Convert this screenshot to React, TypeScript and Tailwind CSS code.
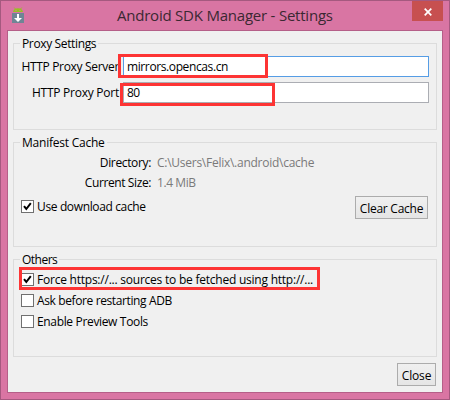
import type { ReactNode } from "react";

function Group({ title, tracking, className, children }: { title: string; tracking: string; className: string; children: ReactNode }) {
  return (
    <section className={`ml-[5px] w-[424px] border border-[#dcdcdc] ${className}`}>
      <h2 className={`-mt-[9px] ml-[6px] h-4 w-fit bg-[#f0f0f0] pl-[2px] pr-[2px] ${tracking}`}>{title}</h2>
      {children}
    </section>
  );
}

function Check({ label, checked, tracking, className = "" }: { label: string; checked?: boolean; tracking: string; className?: string }) {
  return (
    <label className={`ml-[7px] flex h-4 items-start gap-[3px] ${className}`}>
      <span className="mt-[2px] size-[13px] shrink-0 border border-[#707070] bg-white">
        {checked && (
          <svg viewBox="0 0 11 11" className="block size-[11px]">
            <path d="M2 5.2 4.3 8 8.8 2.2" fill="none" stroke="#000" strokeWidth="2" />
          </svg>
        )}
      </span>
      <span className={tracking}>{label}</span>
    </label>
  );
}

function Field({ label, value, labelTracking, valueTracking, border, className }: { label: string; value: string; labelTracking: string; valueTracking: string; border: string; className: string }) {
  return (
    <div className={`flex h-[21px] gap-[4px] ${className}`}>
      <span className={`w-[105px] shrink-0 pt-[2px] text-right ${labelTracking}`}>{label}</span>
      <div className={`w-[306px] border bg-white pl-[3px] pt-px ${border} ${valueTracking}`}>{value}</div>
    </div>
  );
}

function Info({ label, value, labelTracking, valueTracking }: { label: string; value: string; labelTracking: string; valueTracking: string }) {
  return (
    <div className="mt-1 flex h-4 gap-[6px]">
      <span className={`w-[137px] text-right ${labelTracking}`}>{label}</span>
      <span className={`text-[#7a7a7a] ${valueTracking}`}>{value}</span>
    </div>
  );
}

export default function App() {
  return (
    <div className="relative h-[400px] w-[450px] overflow-hidden whitespace-nowrap border border-[#a5597f] bg-[#d975a3] font-['Open_Sans','Noto_Sans',sans-serif] text-[12px] leading-[18px] text-black">
      <header className="flex h-[29px] items-start">
        <svg viewBox="0 0 12 16" className="ml-[11px] mt-[6px] h-4 w-3 shrink-0">
          <path d="M1 5C1.2 2.8 3.2 1.2 6 1.2s4.800 1.600 5 3.800z" fill="#97c024" />
          <path d="M2.200.5 3.500 2M9.800.5 8.500 2" stroke="#97c024" strokeWidth=".9" />
          <path d="M3.500 3h1v1h-1zM7.500 3h1v1h-1z" fill="#d975a3" />
          <path d="M0 6h12v10H0z" fill="#6f8595" />
          <path d="M5 7h2v4h3l-4 4-4-4h3z" fill="#fff" />
        </svg>
        <h1 className="ml-[93px] mt-1 w-[217px] text-[15px] leading-5 tracking-[-0.22px] text-[#3b2832]">Android SDK Manager - Settings</h1>
        <button className="ml-auto mr-[6px] mt-0 flex h-5 w-[31px] items-center justify-center bg-[#c75050]">
          <svg viewBox="0 0 8 8" className="mt-px size-2">
            <path d="M.7.7 7.300 7.300M7.300.7.7 7.300" stroke="#fff" strokeWidth="1.700" />
          </svg>
        </button>
      </header>

      <main className="ml-[6px] h-[363px] w-[436px] border border-[#b55f88] bg-[#f0f0f0]">
        <Group title="Proxy Settings" tracking="tracking-[-0.36px]" className="mt-3 h-[87px]">
          <Field label="HTTP Proxy Server" value="mirrors.opencas.cn" labelTracking="tracking-[-0.32px]" valueTracking="tracking-[-0.39px]" border="border-[#569de5]" className="mt-[5px]" />
          <Field label="HTTP Proxy Port" value="80" labelTracking="tracking-[-0.25px]" valueTracking="tracking-[-0.6px]" border="border-[#abadb3]" className="mt-[5px]" />
        </Group>

        <Group title="Manifest Cache" tracking="tracking-[-0.23px]" className="mt-3 h-[105px]">
          <Info label="Directory:" value="C:\Users\Felix\.android\cache" labelTracking="tracking-[-0.35px]" valueTracking="tracking-[-0.26px]" />
          <Info label="Current Size:" value="1.4 MiB" labelTracking="tracking-[-0.4px]" valueTracking="tracking-[-0.43px]" />
          <div className="mt-[6px] flex h-[23px] items-start justify-between pr-[8px]">
            <Check checked label="Use download cache" tracking="tracking-[-0.36px]" className="mt-[2px]" />
            <button className="h-[23px] w-[73px] border border-[#acacac] bg-linear-to-b from-[#f0f0f0] to-[#e5e5e5] pt-[2px] tracking-[-0.25px]">Clear Cache</button>
          </div>
        </Group>

        <Group title="Others" tracking="tracking-[-0.5px]" className="mt-3 h-[98px]">
          <Check checked label="Force https://... sources to be fetched using http://..." tracking="tracking-[-0.23px]" className="mt-1" />
          <Check label="Ask before restarting ADB" tracking="tracking-[-0.38px]" className="mt-[5px]" />
          <Check label="Enable Preview Tools" tracking="tracking-[-0.34px]" className="mt-[5px]" />
        </Group>

        <div className="mr-[6px] mt-[6px] flex justify-end">
          <button className="h-[23px] w-[39px] border border-[#acacac] bg-linear-to-b from-[#f0f0f0] to-[#e5e5e5] pt-[2px] tracking-[-0.15px]">Close</button>
        </div>
      </main>

      <div className="absolute left-[117px] top-[53px] h-6 w-[150px] border-3 border-[#fd3434]" />
      <div className="absolute left-[119px] top-[82px] h-[23px] w-[155px] border-3 border-[#fd3434]" />
      <div className="absolute left-[18px] top-[266px] h-[23px] w-[301px] border-3 border-[#fd3434]" />
    </div>
  );
}
